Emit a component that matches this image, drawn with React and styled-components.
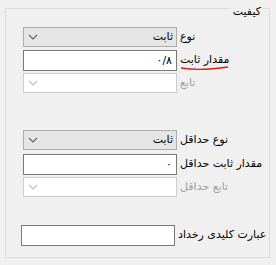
import React from 'react';
import styled, { createGlobalStyle } from 'styled-components';

const Global = createGlobalStyle`
  html, body {
    margin: 0;
    padding: 0;
    background: #f0f0f0;
  }
  body {
    font-family: 'DejaVu Sans', 'Noto Sans', sans-serif;
    font-size: 11px;
    color: #000;
  }
`;

const Page = styled.div`
  width: 276px;
  height: 265px;
  padding: 8px 6px 0 5px;
  box-sizing: border-box;
`;

const Group = styled.div`
  position: relative;
  height: 250px;
  border: 1px solid #dcdcdc;
  box-sizing: border-box;
  padding: 18px 0 0 17px;
`;

const Legend = styled.div`
  position: absolute;
  top: -4px;
  right: 6px;
  padding: 0 2px;
  background: #f0f0f0;
  direction: rtl;
  line-height: 14px;
`;

const Block = styled.div`
  display: flex;
  flex-direction: column;
  margin-top: ${p => p.$top || 0}px;
`;

const Row = styled.div`
  display: flex;
  align-items: center;
  margin-top: ${p => p.$top || 0}px;
  margin-left: ${p => p.$shift || 0}px;
`;

const Combo = styled.div`
  width: 154px;
  height: 20px;
  box-sizing: border-box;
  border: 1px solid ${p => (p.$disabled ? '#cccccc' : '#adadad')};
  background: ${p => (p.$disabled ? '#ffffff' : '#e5e5e5')};
  display: flex;
  align-items: center;
  justify-content: space-between;
  padding: 0 3px 0 4px;
`;

const ComboText = styled.span`
  direction: rtl;
  line-height: 18px;
`;

const TextBox = styled.div`
  width: 154px;
  height: 21px;
  box-sizing: border-box;
  border: 1px solid #7a7a7a;
  background: #fff;
  display: flex;
  align-items: center;
  justify-content: flex-start;
  padding: 0 4px;
  direction: rtl;
`;

const Label = styled.span`
  position: relative;
  direction: rtl;
  margin-left: 3px;
  white-space: nowrap;
  color: ${p => (p.$disabled ? '#a0a0a0' : '#000')};
  line-height: 14px;
  margin-top: -1px;
`;

const Squiggle = styled.svg`
  position: absolute;
  left: 0;
  bottom: -5px;
`;

const Chevron = ({ disabled }) => (
  <svg width="10" height="6" viewBox="0 0 10 6">
    <polyline
      points="1,1 5,5 9,1"
      fill="none"
      stroke={disabled ? '#bdbdbd' : '#606060'}
      strokeWidth="1.1"
    />
  </svg>
);

const Select = ({ value, disabled }) => (
  <Combo $disabled={disabled}>
    <Chevron disabled={disabled} />
    <ComboText>{value}</ComboText>
  </Combo>
);

export default function App() {
  return (
    <>
      <Global />
      <Page>
        <Group>
          <Legend>کیفیت</Legend>
          <Block>
            <Row>
              <Select value="ثابت" />
              <Label>نوع</Label>
            </Row>
            <Row $top={3}>
              <TextBox>۰/۸</TextBox>
              <Label>
                مقدار ثابت
                <Squiggle width="50" height="6" viewBox="0 0 50 6">
                  <path d="M1 2 Q 20 5 48 1" fill="none" stroke="#d02020" strokeWidth="1.3" />
                </Squiggle>
              </Label>
            </Row>
            <Row $top={2}>
              <Select disabled />
              <Label $disabled>تابع</Label>
            </Row>
          </Block>
          <Block $top={37}>
            <Row>
              <Select value="ثابت" />
              <Label>نوع حداقل</Label>
            </Row>
            <Row $top={4}>
              <TextBox>۰</TextBox>
              <Label>مقدار ثابت حداقل</Label>
            </Row>
            <Row $top={2}>
              <Select disabled />
              <Label $disabled>تابع حداقل</Label>
            </Row>
          </Block>
          <Row $top={28} $shift={-2}>
            <TextBox />
            <Label>عبارت کلیدی رخداد</Label>
          </Row>
        </Group>
      </Page>
    </>
  );
}
